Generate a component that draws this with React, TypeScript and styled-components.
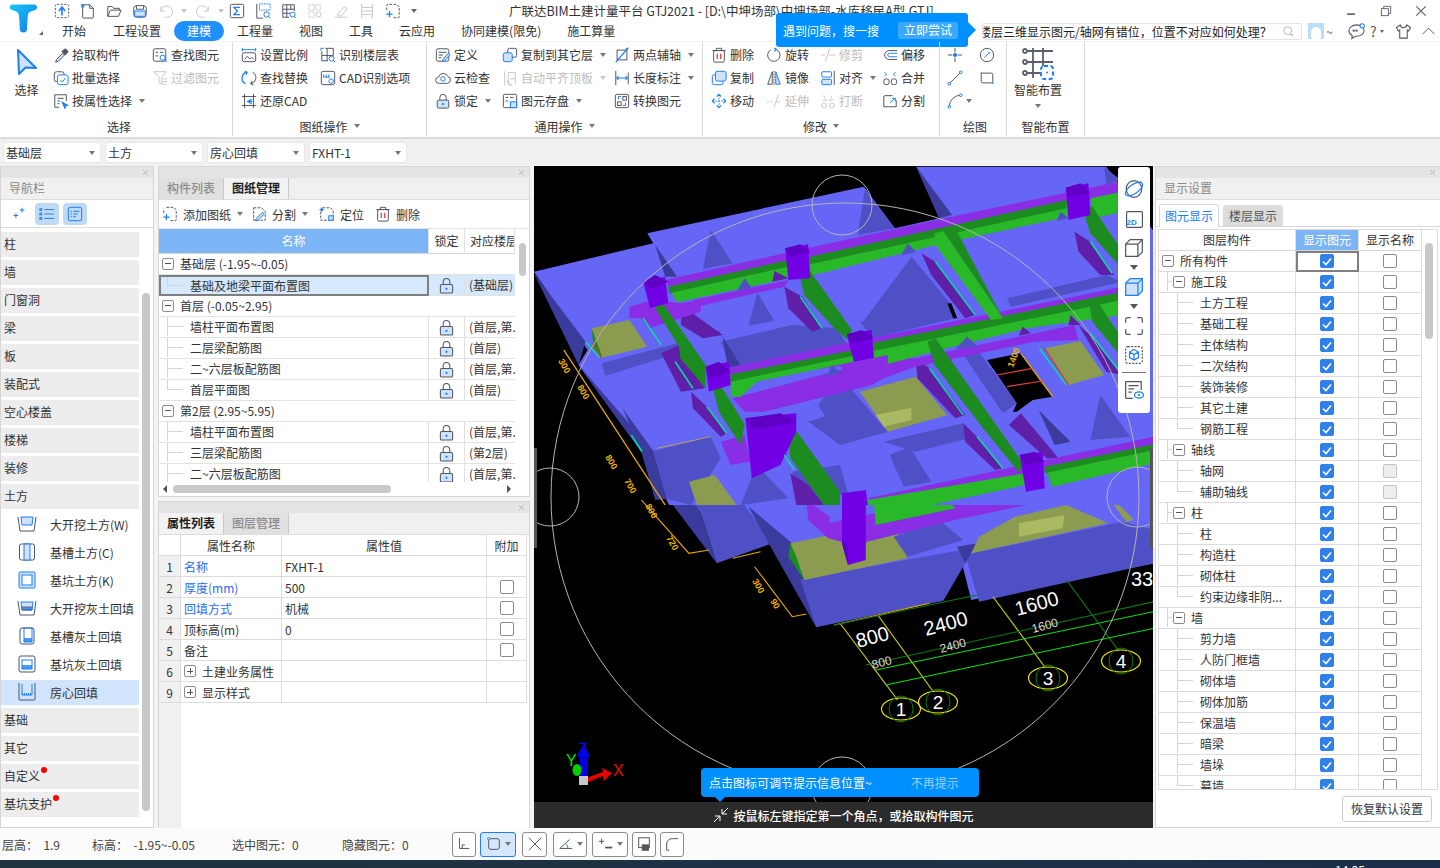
import React from "react";
import styled, { createGlobalStyle } from "styled-components";
import { X } from "lucide-react";

const GR = "#50555f";
const BL = "#1d7ff2";
const LB = "#cfe2fb";
const FONT = `"Noto Sans CJK SC", "Noto Sans", sans-serif`;

const Global = createGlobalStyle`
  html, body { margin: 0; padding: 0; background: #f0f0f0; }
  * { box-sizing: border-box; }
  body { font-family: ${FONT}; font-size: 12px; color: #333; }
`;

const Root = styled.div`
  width: 1440px; height: 868px; display: flex; flex-direction: column; overflow: hidden; background: #f0f0f0;
`;

/* ---------- icons ---------- */
const IconSvg = styled.svg<{ $s: number; $dim?: boolean }>`
  width: ${p => p.$s}px; height: ${p => p.$s}px; flex: none; display: block;
  opacity: ${p => (p.$dim ? 0.32 : 1)};
`;
const ICONS: Record<string, React.ReactNode> = {
  upload: <><rect x="1.5" y="1.5" width="15" height="15" rx="2" strokeDasharray="2.4 1.6" /><path d="M9 14V6M5.5 9 9 4.5 12.500 9" stroke={BL} strokeWidth="1.8" /></>,
  newfile: <><path d="M3 2h8l4 4v10a1 1 0 0 1-1 1H4a1 1 0 0 1-1-1z" /><path d="M11 2v4h4" /><rect x="1" y="1" width="4" height="4" fill={BL} stroke="none" opacity=".7" /></>,
  folder: <><path d="M2 15V4h5l1.500 2H15v2" /><path d="M2 15l3-7h12l-3 7z" /></>,
  save: <><rect x="2" y="3" width="14" height="13" rx="3" /><path d="M5 3v4h8V3" /><rect x="3" y="9" width="12" height="6" fill={LB} stroke={BL} /></>,
  undo: <path d="M3 4v5h5M3.500 9A6.500 6.500 0 1 1 7 15.500" />,
  redo: <path d="M15 4v5h-5M14.500 9A6.500 6.500 0 1 0 11 15.500" />,
  sigma: <><rect x="1.500" y="1.500" width="15" height="15" rx="1.500" /><path d="M12.500 5H5.500L9.500 9l-4 4h7" stroke={BL} strokeWidth="1.400" /></>,
  calc: <><path d="M2 1v16h7" /><rect x="5" y="1" width="12" height="7" stroke={BL} strokeDasharray="1.500 1" /><circle cx="13" cy="13" r="3" stroke={BL} /><path d="M15 15l2 2" stroke={BL} /></>,
  gridsearch: <><path d="M2 2h13v7M2 2v14h7M2 7h13M2 11.500h8M6.500 2v14M11 2v6" /><circle cx="13" cy="13" r="2.800" stroke={BL} /><path d="M15 15l2 2" stroke={BL} /></>,
  grid2: <><path d="M2 2h6v6H2zM10 2h5v6h-5zM2 10h6v6H2z" strokeDasharray="2 1" /><circle cx="13" cy="13" r="2.800" /></>,
  erase: <path d="M2 16h14M5 13l8-9 3 2.500-7 8H5z" />,
  ruler: <path d="M3 1v16M15 1v16M3 5h12M3 9h12M3 13h12" />,
  frameplus: <><path d="M5 1.500h8l3 3v11a1 1 0 0 1-1 1H9M2 8V3a1.500 1.500 0 0 1 1.500-1.500" strokeDasharray="3 1.500" /><path d="M5 9v7M1.500 12.500h7" stroke={BL} strokeWidth="1.400" /></>,
  pick: <><path d="M4 14l7-7 2 2-7 7-3 1z" fill={LB} /><path d="M10 5l4-3 3 3-3 4z" fill={GR} /></>,
  batch: <><rect x="1.500" y="2" width="11" height="11" rx="2.500" stroke={GR} /><rect x="5" y="5.500" width="12" height="11" rx="2.500" stroke={BL} fill="#fff" /><path d="M8 11l2.500 2.500L14 9" stroke={BL} /></>,
  attr: <><path d="M7 16H2V2h13v7" /><path d="M5 6h7M5 9h3M5 12h2" /><path d="M10 10l7 4-3 .500-.500 3z" fill={BL} stroke={BL} /></>,
  findel: <><rect x="1.500" y="2" width="14" height="14" rx="2" /><path d="M4 6h3M9 6h4M4 10h3" /><circle cx="12" cy="12" r="2.800" stroke={BL} fill="#fff" /><path d="M14 14l2.500 2.500" stroke={BL} strokeWidth="1.400" /></>,
  filter: <path d="M2 2h14l-5 6v8l-3-2V8zM12 10h5M12 13h5M12 16h5" />,
  scale: <><path d="M1.500 3h15M1.500 1v4M16.500 1v4" stroke={BL} /><rect x="1.500" y="6.500" width="15" height="10" rx="2" /><path d="M4 14l3-3.500 3 3 2-2 2.500 2.500" /></>,
  replace: <><path d="M6.500 2.500A7 7 0 0 0 5 15.500" stroke={BL} strokeWidth="1.500" /><path d="M11.500 15.500A7 7 0 0 0 13 2.500" /><path d="M4 1l3 1.500-1.500 3" stroke={BL} strokeWidth="1.200" /><path d="M14 17l-3-1.500 1.500-3" strokeWidth="1.200" /></>,
  restore: <><path d="M4 1v16M14 1v16M1 4h16M1 14h16" /><path d="M12 7 7.500 9.500 12 12M8 9.500h5" stroke={BL} strokeWidth="1.400" /></>,
  floor: <><path d="M1 4V1.500h3" stroke={BL} /><path d="M6 1.500h9v8H2V5M8 1.500v14M2 9.500v6h7" /><circle cx="13" cy="13" r="2.800" stroke={BL} /><path d="M15 15l2 2" stroke={BL} /></>,
  cad: <><rect x="1.500" y="1.500" width="15" height="15" rx="2" /><path d="M4 8V5M7 8V5M10 8V5M4 8h7" stroke={BL} /><circle cx="12.500" cy="12.500" r="2.500" stroke={BL} fill="#fff" /></>,
  define: <><rect x="1.500" y="2" width="14" height="14" rx="2" /><path d="M4 6h9M4 9h5M4 12h3" /><path d="M9 14l6-7 2 1.500-6 7-2.500.500z" fill={LB} stroke={BL} /></>,
  cloud: <><path d="M5 15H4.500A3.500 3.500 0 0 1 4 8a5.500 5.500 0 0 1 10.500-.5 3.800 3.800 0 0 1-.5 7.500z" /><circle cx="9" cy="10" r="2.500" stroke={BL} /></>,
  lock: <><path d="M5.500 8V5a3.500 3.500 0 0 1 7 0v3" /><rect x="2.500" y="8" width="13" height="9" rx="1.500" fill={LB} /><circle cx="9" cy="12.500" r="1.200" fill={BL} stroke="none" /></>,
  copylayer: <><rect x="6.500" y="1.500" width="10" height="10" rx="2" /><rect x="1.500" y="6.500" width="10" height="10" rx="2" fill={LB} stroke={BL} /></>,
  align: <><path d="M3 1.500v16" /><path d="M7 3v12M15 3v12M7 3h8" /><path d="M7 17l-1-5 5 5zM9 10h6" /></>,
  two: <><rect x="3.500" y="3.500" width="11" height="11" /><path d="M16 1 2 17M13 3l3-2" stroke={BL} strokeWidth="1.500" /></>,
  length: <><path d="M2 1v16M16 3v13" /><path d="M3 9h12M5 7l-2 2 2 2M13 7l2 2-2 2" stroke={BL} strokeWidth="1.200" /></>,
  disk: <><rect x="1.500" y="1.500" width="15" height="15" rx="1.500" /><path d="M4 5h3M9 5h4M4 9h3" /><rect x="9.500" y="10" width="7" height="6.500" fill={LB} stroke={BL} /></>,
  convert: <><rect x="1.500" y="1.500" width="15" height="15" rx="2" /><rect x="4" y="10" width="4" height="4" /><rect x="10" y="4" width="4" height="4" /><path d="M5 7V4h3M13 11v3h-3" stroke={BL} /></>,
  del: <><path d="M1.500 4h15M6 4V1.500h6V4" /><rect x="3" y="4" width="12" height="13" rx="1.500" /><path d="M7 7.500v6M11 7.500v6" stroke="#e0242a" strokeWidth="1.300" /></>,
  copy: <><rect x="5" y="1.500" width="12" height="11" rx="2" stroke={BL} fill={LB} /><path d="M5 5.500H3a1.500 1.500 0 0 0-1.500 1.500v8A1.500 1.500 0 0 0 3 16.500h9a1.500 1.500 0 0 0 1.500-1.500v-2.500" stroke={BL} /></>,
  move: <><path d="M9 2v14M2 9h14" stroke={BL} strokeDasharray="1.800 1.400" /><path d="M6.500 4 9 1.500 11.500 4M6.500 14 9 16.500 11.500 14M4 6.500 1.500 9 4 11.500M14 6.500 16.500 9 14 11.500" stroke={BL} strokeWidth="1.300" /></>,
  rotate: <><path d="M11 2.500A7 7 0 1 1 5.500 3" /><path d="M9 1l2.500 1.500L9.500 5" stroke={BL} strokeWidth="1.300" /></>,
  mirror: <><path d="M7 2 2 16h5z" /><path d="M11 2l5 14h-5z" fill={LB} stroke={BL} /><path d="M9 1v16" strokeDasharray="2 1" /></>,
  extend: <path d="M1 10h2.500M5.500 10H8M11 10h5M14 2 9 16" />,
  trim: <path d="M1 9h5M10 9h7M11 2 6 16" />,
  alignb: <><rect x="2" y="2" width="11" height="6" rx="1" stroke={BL} /><rect x="2" y="10.500" width="11" height="6" rx="1" stroke={BL} fill={LB} /><path d="M16 1v16" /></>,
  breakit: <><path d="M4 3l1.500 3M13 3l-1 3M3 8h5M10 8h5" stroke={GR} /><rect x="2" y="11.500" width="5" height="5" rx="2" /><rect x="11" y="11.500" width="5" height="5" rx="2" /></>,
  offset: <><path d="M17 4H8a5 5 0 0 0 0 10h9" stroke={GR} /><path d="M17 7H8.500a2 2 0 0 0 0 4H17" stroke={BL} /></>,
  merge: <><path d="M3 2.500 5 5 3 7M15 2.500 13 5l2 2" stroke={BL} /><rect x="2" y="10" width="6" height="6.500" rx="2.500" /><rect x="10.500" y="10" width="6" height="6.500" rx="2.500" /></>,
  split: <><path d="M12 3H3.500A1.500 1.500 0 0 0 2 4.500v11h14V8" /><path d="M9 11l6-5M11 6h4v3" stroke={BL} /></>,
  point: <><path d="M9 1v5M9 12v5M1 9h5M12 9h5" /><circle cx="9" cy="9" r="1.800" fill={BL} stroke={BL} /></>,
  gauge: <><circle cx="9" cy="9" r="7.500" /><path d="M6 12l5-5" stroke={BL} /><circle cx="11.500" cy="6.500" r="1" fill={BL} stroke="none" /></>,
  line: <><path d="M2.500 15.500 15.500 2.500" /><circle cx="2.500" cy="15.500" r="1.500" stroke={BL} fill="#fff" /><circle cx="15.500" cy="2.500" r="1.500" stroke={BL} fill="#fff" /></>,
  rect: <><rect x="2.500" y="3.500" width="13" height="11" rx="1.500" /><circle cx="2.500" cy="3.500" r="1" fill={BL} stroke="none" /><circle cx="15.500" cy="14.500" r="1" fill={BL} stroke="none" /></>,
  arc: <><path d="M2.500 15.500A13 13 0 0 1 15.500 2.500" /><circle cx="2.500" cy="15.500" r="1.500" stroke={BL} fill="#fff" /><circle cx="15.500" cy="2.500" r="1.500" stroke={BL} fill="#fff" /></>,
  sparkle: <path d="M10 4h6M13 1v6M2 11h6M5 8v6" stroke={BL} strokeWidth="1.300" />,
  listv: <><path d="M6 4h11M6 9h11M6 14h11" stroke={BL} /><rect x="1" y="3" width="2" height="2" stroke={BL} /><rect x="1" y="8" width="2" height="2" stroke={BL} /><rect x="1" y="13" width="2" height="2" stroke={BL} /></>,
  listc: <><rect x="1.500" y="1.500" width="15" height="15" rx="2" stroke={BL} /><path d="M4 6h1.500M7 6h7M4 9h1.500M7 9h5M4 12h1.500M7 12h3" stroke={BL} /></>,
  addsheet: <><path d="M5 1.500h8l3 3v11a1 1 0 0 1-1 1H9M2 8V3" strokeDasharray="3 1.500" /><path d="M5 9v7M1.500 12.500h7" stroke={BL} strokeWidth="1.400" /></>,
  splitsheet: <><path d="M3 2h9l4 4v10H3z" strokeDasharray="3 1.500" /><path d="M6 14l7-7 2 2-7 7-3 .500z" fill={LB} stroke={BL} /></>,
  locate: <><path d="M4 2h9l3 3v11H2V6" strokeDasharray="3 1.500" /><path d="M3 1l1 2 2 1-2 1-1 2-1-2-2-1 2-1z" fill={BL} stroke="none" /><rect x="11" y="11" width="5" height="5" fill={LB} stroke={BL} /></>,
  sphere: <><ellipse cx="9" cy="9" rx="7" ry="7.500" /><ellipse cx="9" cy="9" rx="9" ry="4" transform="rotate(-35 9 9)" stroke={BL} /></>,
  d2: <><rect x="1.500" y="1.500" width="15" height="15" rx="1" /></>,
  cube: <><path d="M1.500 5.500l4-4h11v11l-4 4h-11z" /><path d="M1.500 5.500h11v11M12.500 5.500l4-4" /></>,
  cubeb: <><path d="M1.500 5.500l4-4h11v11l-4 4h-11z" stroke={BL} fill={LB} /><path d="M1.500 5.500h11v11M12.500 5.500l4-4" stroke={BL} /></>,
  corners: <path d="M1.500 6V3a1.500 1.500 0 0 1 1.500-1.500h3M12 1.500h3A1.500 1.500 0 0 1 16.500 3v3M16.500 12v3a1.500 1.500 0 0 1-1.500 1.500h-3M6 16.500H3A1.500 1.500 0 0 1 1.500 15v-3" />,
  dashcube: <><rect x="1.500" y="1.500" width="15" height="15" rx="2" strokeDasharray="1.800 1.200" /><path d="M9 4l4 2.300v5L9 13.500l-4-2.200v-5zM5 6.300 9 8.500l4-2.200M9 8.500v5" stroke={BL} /></>,
  sheet: <><path d="M8 16.500H2A.5.5 0 0 1 1.500 16V2A.5.5 0 0 1 2 1.500h13.500V9" /><path d="M4 5h9M4 8h5M4 11h3" /><ellipse cx="13.500" cy="13.500" rx="4" ry="2.800" stroke={BL} /><circle cx="13.500" cy="13.500" r="1" fill={BL} stroke="none" /></>,
  search: <><circle cx="8" cy="8" r="5.500" stroke="#aaa" /><path d="M12 12l3 3" stroke="#aaa" strokeWidth="1.600" /></>,
  chat: <><path d="M9 2C4.500 2 1 4.800 1 8.200c0 2.200 1.400 4 3.500 5L4 16.500l3.800-2.400H9c4.500 0 8-2.600 8-6S13.500 2 9 2z" /><circle cx="6" cy="8" r=".7" fill={GR} /><circle cx="9" cy="8" r=".7" fill={GR} /><circle cx="15" cy="3" r="2.300" fill="#fff" stroke={BL} /></>,
  shirt: <path d="M5.500 2 1.500 5l2 3.500L5 7.500V16h8V7.500l1.500 1 2-3.500-4-3C12 4 10.500 5 9 5S6 4 5.500 2z" />,
  chevup: <path d="M2 12l7-7 7 7" />,
  min: <path d="M4 13h10" strokeWidth="2" />,
  max: <><rect x="3" y="6" width="9" height="9" /><path d="M6 6V3h9v9h-3" /></>,
  close: <path d="M3 3l12 12M15 3 3 15" strokeWidth="1.300" />,
  corner: <><path d="M4 2v12h11M7 14v-4h3" /></>,
  roundsel: <><rect x="3" y="3" width="12" height="12" rx="2.500" stroke={GR} /><circle cx="3" cy="3" r="1.300" fill="#fff" stroke={BL} /></>,
  crossbox: <path d="M2 2l14 14M16 2 2 16" stroke={GR} />,
  angle: <><path d="M2 14h14M2 14 13 4" /><path d="M9 9a5 5 0 0 1 2 5" stroke={BL} /></>,
  plusline: <><path d="M1 6h6M4 3v6" /><path d="M8 13h8" strokeWidth="2" /></>,
  docs: <><rect x="3" y="2" width="12" height="11" /><rect x="7" y="10" width="7" height="6" fill="#555" /></>,
  curve: <path d="M3 16V9a6 6 0 0 1 6-6h7M3 16h3" />,
};
const Icon = ({ n, s = 16, dim }: { n: string; s?: number; dim?: boolean }) => (
  <IconSvg viewBox="0 0 18 18" $s={s} $dim={dim} fill="none" stroke={GR} strokeWidth={1.1}>{ICONS[n]}</IconSvg>
);

/* ---------- header ---------- */
const Header = styled.header`
  position: relative; height: 41px; background: #fff; display: flex; flex: none;
`;
const LogoCell = styled.div`
  width: 50px; flex: none; display: flex; padding: 3px 0 0 8px; position: relative;
`;
const LogoCaret = styled.span`
  position: absolute; left: 39px; top: 31px; border-style: solid; border-width: 0 0 4px 4px;
  border-color: transparent transparent #666 transparent;
`;
const HeaderRows = styled.div`flex: 1; display: flex; flex-direction: column; min-width: 0;`;
const TitleRow = styled.div`height: 21px; display: flex; align-items: center;`;
const QuickBtn = styled.span<{ $ml?: number }>`
  width: 26px; height: 21px; flex: none; display: flex; align-items: center; justify-content: center;
  margin-left: ${p => p.$ml || 0}px;
`;
const QuickCaret = styled.span<{ $dim?: boolean; $w?: number }>`
  width: ${p => p.$w || 10}px; flex: none; display: flex; justify-content: center;
  &::after { content: ""; border-style: solid; border-width: 4px 3px 0; border-color: ${p => (p.$dim ? "#c4c4c4" : "#666")} transparent transparent; }
`;
const Title = styled.div`
  margin-left: 87px; white-space: nowrap; font-size: 12.5px; color: #333; font-family: "Noto Sans CJK SC", sans-serif;
`;
const WinControls = styled.div`margin-left: auto; display: flex; align-items: center; gap: 21px; padding-right: 12px;`;
const TabRow = styled.div`height: 20px; display: flex; align-items: center; margin-left: -1px;`;
const TopTab = styled.div<{ $on?: boolean }>`
  padding: 0 13px; height: 20px; line-height: 20px; border-radius: 10px; white-space: nowrap; flex: none;
  color: ${p => (p.$on ? "#fff" : "#333")}; background: ${p => (p.$on ? "#1e90ff" : "transparent")};
  &:first-child { padding-right: 14px; }
`;
const TopRight = styled.div`margin-left: auto; width: 458px; display: flex; align-items: center; flex: none;`;
const SearchBox = styled.div`
  width: 320px; height: 17px; border: 1px solid #e3e3e3; border-radius: 2px; display: flex; align-items: center;
  overflow: hidden; padding-right: 6px; flex: none;
`;
const SearchText = styled.div`flex: 1; overflow: hidden; white-space: nowrap; color: #222; text-indent: -4px; font-size: 12px; line-height: 15px;`;
const Avatar = styled.div`
  width: 16px; height: 16px; margin-left: 6px; background: #bcdcfa; flex: none; display: flex; align-items: flex-end; justify-content: center;
  &::after { content: ""; width: 10px; height: 12px; background: #fff; border-radius: 5px 5px 2px 2px; }
`;
const Tilde = styled.span`width: 24px; padding-left: 2px; color: #555; flex: none;`;
const RightIcons = styled.div`display: flex; align-items: center; gap: 9px;`;
const HelpMark = styled.span`font-size: 14px; color: #555; display: flex; align-items: center; gap: 3px; margin: 0 2px 0 -4px;
  &::after { content: ""; border-style: solid; border-width: 3px 2px 0; border-color: #666 transparent transparent; }`;
const Popover = styled.div`
  position: absolute; left: 776px; top: 13px; width: 192px; height: 34px; background: #0090ff; border-radius: 3px;
  display: flex; align-items: center; padding-left: 7px; color: #fff; font-size: 12px; justify-content: space-between; padding-right: 10px;
  &::after { content: ""; position: absolute; left: 100%; top: 9px; border-style: solid; border-width: 8px 0 8px 8px; border-color: transparent transparent transparent #0090ff; }
`;
const PopBtn = styled.span`height: 17px; line-height: 16px; width: 60px; text-align: center; background: #3aa9ff; border-radius: 2px;`;

/* ---------- ribbon ---------- */
const Ribbon = styled.section`
  height: 98px; flex: none; background: #fff; display: flex; border-bottom: 2px solid #dcdcdc; border-top: 1px solid #f2f2f2;
`;
const Group = styled.div<{ $w: number }>`
  width: ${p => p.$w}px; flex: none; display: flex; flex-direction: column; position: relative; padding-top: 1px;
  border-right: 1px solid #dadada; margin-bottom: 1px;
`;
const GroupBody = styled.div<{ $pl?: number }>`flex: 1; display: flex; padding-left: ${p => p.$pl || 0}px;`;
const GroupLabel = styled.div<{ $pl?: number }>`
  height: 20px; display: flex; align-items: center; justify-content: center; gap: 6px; color: #333; flex: none;
  padding-left: ${p => p.$pl || 0}px;
`;
const Col = styled.div<{ $w: number }>`width: ${p => p.$w}px; flex: none; display: flex; flex-direction: column;`;
const Tool = styled.div<{ $dim?: boolean }>`
  height: 23px; display: flex; align-items: center; gap: 3px; white-space: nowrap; color: ${p => (p.$dim ? "#bdbdbd" : "#333")};
`;
const Caret = styled.span<{ $dim?: boolean; $ml?: number }>`
  display: inline-block; flex: none; margin-left: ${p => p.$ml ?? 4}px; border-style: solid; border-width: 4px 3px 0;
  border-color: ${p => (p.$dim ? "#c8c8c8" : "#777")} transparent transparent;
`;
const BigCol = styled.div<{ $w: number }>`
  width: ${p => p.$w}px; flex: none; display: flex; flex-direction: column; align-items: center; padding-top: 5px;
`;
const BigLabel = styled.div<{ $mt?: number; $mb?: number }>`margin-top: ${p => p.$mt || 6}px; margin-bottom: ${p => p.$mb || 0}px; line-height: 16px; white-space: nowrap;`;

type T = [string, string, boolean?, boolean?];
const Tools = ({ w, items }: { w: number; items: (T | null)[] }) => (
  <Col $w={w}>
    {items.map((it, i) =>
      it ? (
        <Tool key={i} $dim={it[3]}>
          <Icon n={it[0]} dim={it[3]} />
          {it[1]}
          {it[2] && <Caret $dim={it[3]} />}
        </Tool>
      ) : (
        <Tool key={i} />
      )
    )}
  </Col>
);

const Combos = styled.div`
  height: 26px; flex: none; background: #f0f0f0; display: flex; gap: 4px; padding: 3px 0 0 3px;
`;
const Combo = styled.div`
  width: 98px; height: 21px; background: #fff; border-radius: 3px; display: flex; align-items: center;
  justify-content: space-between; padding: 0 5px 0 2px; color: #333; border: 1px solid #e8e8e8;
`;

/* ---------- layout ---------- */
const Main = styled.main`height: 663px; flex: none; display: flex; padding-top: 1px; background: #f4f4f4;`;
const Panel = styled.section<{ $w?: number; $h?: number }>`
  ${p => (p.$w ? `width: ${p.$w}px;` : "")} ${p => (p.$h ? `height: ${p.$h}px;` : "")}
  flex: none; background: #fff; border: 1px solid #d6d6d6; display: flex; flex-direction: column; overflow: hidden;
`;
const Strip = styled.div`
  height: 11px; background: #e4e4e4; flex: none; display: flex; justify-content: flex-end; align-items: center; padding-right: 3px; color: #aaa;
`;
const PanelTitle = styled.div`
  height: 22px; background: #f0f0f0; color: #8a8a8a; flex: none; padding-left: 8px; line-height: 20px; border-bottom: 1px solid #ddd;
`;

/* nav */
const NavTools = styled.div`
  height: 28px; display: flex; align-items: center; gap: 4px; padding-left: 8px; border-bottom: 1px solid #ddd; flex: none;
`;
const NavBtn = styled.span<{ $on?: boolean }>`
  width: 24px; height: 22px; display: flex; align-items: center; justify-content: center; border-radius: 4px;
  background: ${p => (p.$on ? "#c0d9f5" : "transparent")}; margin-left: ${p => (p.$on ? 0 : -2)}px;
`;
const NavBody = styled.div`flex: 1; display: flex; min-height: 0; padding-top: 4px;`;
const NavList = styled.div`width: 138px; flex: none; display: flex; flex-direction: column; gap: 3px;`;
const NavHead = styled.div`
  height: 25px; background: #ededed; display: flex; align-items: center; padding: 0 0 2px 3px; position: relative; flex: none; color: #333;
`;
const RedDot = styled.span`
  width: 6px; height: 6px; border-radius: 50%; background: #f00; margin: -12px 0 0 1px; flex: none;
`;
const NavItem = styled.div<{ $on?: boolean }>`
  height: 25px; display: flex; align-items: center; padding: 0 0 1px 16px; gap: 13px; flex: none; white-space: nowrap;
  background: ${p => (p.$on ? "#d0e4fb" : "transparent")}; color: #333;
`;
const NavScroll = styled.div`
  width: 8px; height: 518px; margin: 61px 0 0 3px; background: #c8c8c8; border-radius: 4px; flex: none;
`;

/* mid */
const MidCol = styled.div`width: 372px; margin-left: 4px; flex: none; display: flex; flex-direction: column; gap: 4px;`;
const TabsBar = styled.div`height: 22px; display: flex; background: #f0f0f0; border-bottom: 1px solid #ddd; flex: none;`;
const FlatTab = styled.div<{ $on?: boolean }>`
  width: 65px; text-align: center; line-height: 20px; border-right: 1px solid #c8c8c8;
  background: ${p => (p.$on ? "#f2f2f2" : "#e0e0e0")}; color: ${p => (p.$on ? "#222" : "#8c8c8c")}; font-weight: ${p => (p.$on ? 600 : 500)};
`;
const MidTools = styled.div`height: 29px; display: flex; align-items: center; padding-left: 3px; border-bottom: 1px solid #e2e2e2; flex: none;`;
const MidTool = styled.div<{ $mr: number }>`display: flex; align-items: center; gap: 5px; margin-right: ${p => p.$mr}px; white-space: nowrap;`;
const Spacer = styled.span<{ $w: number }>`width: ${p => p.$w}px; flex: none; margin-right: -5px;`;
const TreeWrap = styled.div`flex: 1; display: flex; min-height: 0;`;
const TreeTable = styled.div`width: 356px; flex: none; overflow: hidden; height: 253px;`;
const TreeHead = styled.div`display: grid; grid-template-columns: 270px 36px 50px; height: 25px;`;
const HeadCell = styled.div<{ $on?: boolean; $left?: boolean }>`
  display: flex; align-items: center; justify-content: ${p => (p.$left ? "flex-start" : "center")}; white-space: nowrap; overflow: hidden;
  padding: 0 0 1px ${p => (p.$left ? 5 : 0)}px;
  background: ${p => (p.$on ? "#7cb5f5" : "#fff")}; color: ${p => (p.$on ? "#fff" : "#333")};
  border-right: 1px solid #e0e0e0; border-bottom: 1px solid #d8d8d8;
`;
const TreeRow = styled.div<{ $sel?: boolean }>`
  display: grid; grid-template-columns: 270px 36px 50px; height: 21px; background: ${p => (p.$sel ? "#d6e8fb" : "#fff")};
`;
const GroupRow = styled.div`height: 21px; display: flex; align-items: center; padding: 0 0 1px 3px; gap: 6px; border-bottom: 1px solid #e2e2e2; white-space: nowrap;`;
const Toggle = styled.span`
  width: 12px; height: 12px; border: 1px solid #8c8c8c; border-radius: 2px; flex: none; display: flex; align-items: center; justify-content: center; background: #fff;
  &::after { content: ""; width: 6px; height: 1px; background: #555; }
`;
const PlusToggle = styled(Toggle)`
  position: relative;
  &::before { content: ""; position: absolute; width: 1px; height: 6px; background: #555; left: 4.500px; top: 2px; }
`;
const RToggle = styled(Toggle)`margin: 0 6px 0 -6px;`;
const NameCell = styled.div<{ $sel?: boolean }>`
  display: flex; align-items: center; white-space: nowrap; padding: 0 0 1px 8px; min-width: 0;
  border-right: 1px solid #e0e0e0; border-bottom: 1px solid #e2e2e2;
  ${p => (p.$sel ? "outline: 2px solid #7f7f7f; outline-offset: -2px; border: 0;" : "")}
`;
const Guide = styled.span<{ $w: number; $last?: boolean }>`
  width: ${p => p.$w}px; height: 100%; flex: none; align-self: stretch; margin-right: 7px;
  background:
    linear-gradient(#d4d4d4, #d4d4d4) 0 0 / 1px ${p => (p.$last ? "50%" : "100%")} no-repeat,
    linear-gradient(#d4d4d4, #d4d4d4) 0 50% / 100% 1px no-repeat;
`;
const LockCell = styled.div`
  display: flex; align-items: center; justify-content: center; border-right: 1px solid #e0e0e0; border-bottom: 1px solid #e2e2e2;
`;
const FloorCell = styled.div`
  display: flex; align-items: center; padding: 0 0 1px 4px; overflow: hidden; white-space: nowrap; border-bottom: 1px solid #e2e2e2;
`;
const VTrack = styled.div`flex: 1; padding: 14px 0 0 4px;`;
const VThumb = styled.div<{ $h: number; $w?: number }>`
  width: ${p => p.$w || 7}px; height: ${p => p.$h}px; background: #c8c8c8; border-radius: 4px;
`;
const HScroll = styled.div`height: 14px; display: flex; align-items: center; padding: 0 5px 0 4px; flex: none; position: relative;`;
const ArrowL = styled.span`border-style: solid; border-width: 4px 4px 4px 0; border-color: transparent #555 transparent transparent;`;
const ArrowR = styled.span`border-style: solid; border-width: 4px 0 4px 4px; border-color: transparent transparent transparent #555; margin-left: auto; margin-right: 13px;`;
const HThumb = styled.span`width: 218px; height: 8px; margin-left: 6px; background: #c8c8c8; border-radius: 4px;`;

/* props */
const PropBody = styled.div`flex: 1; display: flex; flex-direction: column; background: linear-gradient(90deg, #f0f0f0 22px, #fff 22px);`;
const PropRow = styled.div`display: grid; grid-template-columns: 22px 101px 205px 40px; height: 21px; flex: none; width: 369px;`;
const PCell = styled.div<{ $center?: boolean; $bg?: string; $color?: string }>`
  display: flex; align-items: center; justify-content: ${p => (p.$center ? "center" : "flex-start")}; white-space: nowrap;
  padding-left: ${p => (p.$center ? 0 : 3)}px; gap: 6px; background: ${p => p.$bg || "#fff"}; color: ${p => p.$color || "#333"};
  border-right: 1px solid #dcdcdc; border-bottom: 1px solid #dcdcdc;
`;
const Check = styled.span<{ $on?: boolean; $off?: boolean }>`
  width: 14px; height: 14px; border-radius: 2px; display: flex; align-items: center; justify-content: center; flex: none;
  border: 1px solid ${p => (p.$on ? "#2f80e8" : p.$off ? "#c4c4c4" : "#8a8a8a")};
  background: ${p => (p.$on ? "#2f80e8" : p.$off ? "#eeeeee" : "#fff")};
`;

/* canvas */
const Canvas = styled.section`
  width: 619px; margin-left: 4px; flex: none; background: #000; display: flex; flex-direction: column; position: relative; overflow: hidden;
`;
const Scene = styled.div`flex: 1; min-height: 0;`;
const SceneSvg = styled.svg`width: 100%; height: 100%; display: block;`;
const HintBar = styled.div`
  height: 26px; flex: none; background: #2b2b2b; color: #fff; display: flex; align-items: center; justify-content: center; gap: 4px; font-weight: 500;
`;
const ViewTools = styled.div`
  position: absolute; left: 584px; top: 1px; width: 32px; height: 246px; background: #fff; border-radius: 3px;
  display: flex; flex-direction: column; align-items: center; padding-top: 12px; gap: 0;
`;
const ViewBtn = styled.div<{ $mb: number }>`margin-bottom: ${p => p.$mb}px; position: relative; display: flex; flex-direction: column; align-items: center;`;
const TwoD = styled.span`
  position: absolute; left: 2px; bottom: 1px; font-size: 8px; font-weight: 700; color: ${BL}; font-family: "Liberation Sans", sans-serif; line-height: 10px;
`;
const ViewSep = styled.div`width: 24px; height: 1px; background: #777; margin: 0 0 7px;`;
const DownTri = styled.span<{ $mb: number }>`
  border-style: solid; border-width: 5px 4px 0; border-color: #555 transparent transparent; margin-bottom: ${p => p.$mb}px;
`;
const Tip = styled.div`
  position: absolute; left: 167px; bottom: 31px; width: 278px; height: 29px; background: #0090ff; border-radius: 4px; color: #fff;
  display: flex; align-items: center; padding-left: 8px; white-space: nowrap;
  &::after { content: ""; position: absolute; left: 14px; top: 100%; border-style: solid; border-width: 5px 5px 0; border-color: #0090ff transparent transparent; }
`;
const TipMuted = styled.span`margin-left: 39px; color: #9ad2ff;`;
const SplitHandle = styled.div<{ $side: "l" | "r" }>`
  position: absolute; ${p => (p.$side === "l" ? "left: 0;" : "right: 0;")} top: 282px; width: 3px; height: 100px; background: #555;
`;

/* right */
const RightPanel = styled(Panel)`margin-left: 2px; border-right: 0;`;
const PillTabs = styled.div`height: 27px; display: flex; align-items: flex-end; gap: 4px; padding: 0 0 0 3px; border-bottom: 1px solid #d8d8d8; flex: none;`;
const PillTab = styled.div<{ $on?: boolean }>`
  width: 60px; height: ${p => (p.$on ? 23 : 21)}px; text-align: center; line-height: 21px; border-radius: 3px 3px 0 0; margin-bottom: ${p => (p.$on ? -1 : 0)}px;
  background: ${p => (p.$on ? "#fff" : "#dcdcdc")}; color: ${p => (p.$on ? BL : "#555")};
  border: ${p => (p.$on ? "1px solid #d8d8d8" : "0")}; border-bottom: 0;
`;
const RTableBox = styled.div`
  margin: 2px 2px 0 2px; height: 561px; border: 1px solid #dcdcdc; display: flex; overflow: hidden; flex: none;
`;
const RTable = styled.div`width: 263px; flex: none; height: 100%; overflow: hidden;`;
const RRow = styled.div`display: grid; grid-template-columns: 137px 63px 63px; height: 21px;`;
const RName = styled.div`
  display: flex; align-items: center; padding: 0 0 1px 3px; white-space: nowrap; gap: 6px; border-right: 1px solid #dcdcdc; border-bottom: 1px solid #dcdcdc;
`;
const RChild = styled(RName)<{ $lv: number }>`padding-left: ${p => (p.$lv === 1 ? 8 : 18)}px; gap: 0;`;
const RCheck = styled.div<{ $sel?: boolean }>`
  display: flex; align-items: center; justify-content: center; border-right: 1px solid #dcdcdc; border-bottom: 1px solid #dcdcdc;
  ${p => (p.$sel ? "outline: 2px solid #7f7f7f; outline-offset: -2px;" : "")}
`;
const RVTrack = styled.div`padding: 13px 0 0 3px;`;
const RFoot = styled.div`flex: 1; display: flex; justify-content: flex-end; align-items: center; padding-right: 8px;`;
const FootBtn = styled.button`
  width: 90px; height: 26px; background: #fff; border: 1px solid #ccc; border-radius: 3px; font-family: ${FONT}; font-size: 12px; color: #333; padding: 0;
`;

/* status */
const Status = styled.footer`height: 32px; flex: none; background: #fbfbfb; display: flex; align-items: center; color: #444; position: relative;`;
const StatusText = styled.span<{ $w: number }>`width: ${p => p.$w}px; flex: none; white-space: nowrap; padding-left: 2px;`;
const StatusBtn = styled.span<{ $w: number; $on?: boolean; $ml?: number }>`
  width: ${p => p.$w}px; height: 25px; flex: none; display: flex; align-items: center; justify-content: center; gap: 3px;
  border: 1px solid ${p => (p.$on ? BL : "#8c8c8c")}; border-radius: 3px; background: ${p => (p.$on ? "#d6e6fb" : "#fff")};
  margin-left: ${p => p.$ml ?? 4}px;
`;
const Taskbar = styled.div`
  height: 8px; flex: none; background: linear-gradient(90deg, #1f3440, #1c2f4a); overflow: hidden; display: flex; justify-content: flex-end; padding-right: 75px;
  color: #fff; font-size: 12px; line-height: 20px;
`;

/* ---------- data ---------- */
const CheckMark = () => (
  <svg width="10" height="9" viewBox="0 0 10 9"><path d="M1 4.500 4 7.500 9 1.500" fill="none" stroke="#fff" strokeWidth="1.600" /></svg>
);
const LockIcon = () => <Icon n="lock" s={17} />;

const NAV_TOP = ["柱", "墙", "门窗洞", "梁", "板", "装配式", "空心楼盖", "楼梯", "装修", "土方"];
const NAV_BOT: [string, boolean][] = [["基础", false], ["其它", false], ["自定义", true], ["基坑支护", true]];
const NavGlyph = ({ k }: { k: number }) => (
  <svg width="20" height="20" viewBox="0 0 20 20" fill="none" stroke="#45566f" strokeWidth="1">
    {k === 0 && <><path d="M1 3l2 14h14l2-14" /><path d="M4 3h12l-1 8H5z" fill={LB} stroke={BL} /></>}
    {k === 1 && <><rect x="2.500" y="2" width="15" height="16" rx="2" /><rect x="7" y="2" width="6" height="16" fill={LB} stroke={BL} /></>}
    {k === 2 && <><rect x="2" y="2" width="16" height="16" rx="1" fill={LB} stroke={BL} /><rect x="5" y="5" width="10" height="10" fill="#fff" stroke={BL} /></>}
    {k === 3 && <><path d="M1 3l2 14h14l2-14" /><path d="M4 4h12l-1 8H5z" fill={LB} stroke={BL} /><path d="M5 9h10v3H5z" fill={BL} opacity=".8" /></>}
    {k === 4 && <><rect x="3" y="2" width="14" height="16" rx="2" /><rect x="7" y="2" width="8" height="14" stroke={BL} /><rect x="7" y="12" width="8" height="4" fill={BL} stroke="none" opacity=".8" /></>}
    {k === 5 && <><rect x="2" y="2" width="16" height="16" rx="2" /><rect x="5" y="6" width="10" height="9" fill="#fff" stroke={BL} /><rect x="5" y="11" width="10" height="4" fill={BL} stroke="none" opacity=".8" /></>}
    {k === 6 && <><path d="M2 1v16a1 1 0 0 0 1 1h14a1 1 0 0 0 1-1V1" /><path d="M5 2v11h10V2" stroke={BL} /><path d="M5 12h10" stroke={BL} strokeWidth="2" strokeDasharray="1 1" /></>}
  </svg>
);
const NAV_SUB = ["大开挖土方(W)", "基槽土方(C)", "基坑土方(K)", "大开挖灰土回填", "基槽灰土回填", "基坑灰土回填", "房心回填"];

type Tr = { g?: string; n?: string; f?: string; last?: boolean; sel?: boolean };
const TREE: Tr[] = [
  { g: "基础层 (-1.95~-0.05)" },
  { n: "基础及地梁平面布置图", f: "(基础层)", sel: true, last: true },
  { g: "首层 (-0.05~2.95)" },
  { n: "墙柱平面布置图", f: "(首层,第." },
  { n: "二层梁配筋图", f: "(首层)" },
  { n: "二~六层板配筋图", f: "(首层,第." },
  { n: "首层平面图", f: "(首层)", last: true },
  { g: "第2层 (2.95~5.95)" },
  { n: "墙柱平面布置图", f: "(首层,第." },
  { n: "三层梁配筋图", f: "(第2层)" },
  { n: "二~六层板配筋图", f: "(首层,第." },
];
const PROPS: [string, string, string, string, boolean][] = [
  ["1", "名称", "FXHT-1", "#2a6cf0", false],
  ["2", "厚度(mm)", "500", "#2a6cf0", true],
  ["3", "回填方式", "机械", "#2a6cf0", true],
  ["4", "顶标高(m)", "0", "#333", true],
  ["5", "备注", "", "#333", true],
];
const RIGHT: [string, number, boolean?, boolean?][] = [
  ["所有构件", 0], ["施工段", 1], ["土方工程", 2], ["基础工程", 2], ["主体结构", 2], ["二次结构", 2], ["装饰装修", 2], ["其它土建", 2], ["钢筋工程", 2, true],
  ["轴线", 1, false, true], ["轴网", 2, false, true], ["辅助轴线", 2, true, true],
  ["柱", 1], ["柱", 2], ["构造柱", 2], ["砌体柱", 2], ["约束边缘非阴...", 2, true],
  ["墙", 1], ["剪力墙", 2], ["人防门框墙", 2], ["砌体墙", 2], ["砌体加筋", 2], ["保温墙", 2], ["暗梁", 2], ["墙垛", 2], ["幕墙", 2, true],
];

/* ---------- 3D scene (drawing) ---------- */
const L = "#6666f6", M = "#5050c6", D = "#3b3b9e", V = "#8a2ee6", Vd = "#5f1fa8", G = "#28b828", Gd = "#1d8c20", C = "#7200e4", Ct = "#5f00c4", O = "#8b9b50", Ol = "#a9ba62";
type Poly = [string, string];
const BOTTOM: Poly[] = [
  [D, "340,0 460,190 420,40 395,0"],
  [M, "395,0 540,0 600,130 460,190 420,40"],
  [L, "520,0 1560,0 1560,190 1100,300 1075,180 650,240 600,130"],
  [D, "540,20 650,130 680,240 710,382 600,150"],
  [M, "670,238 1075,150 1085,190 1030,302 710,382"],
  [M, "1085,165 1480,65 1560,90 1560,190 1120,305"],
  [D, "1065,140 1115,130 1085,190"],
  [O, "645,130 905,65 940,175 680,240"],
  [Gd, "645,130 640,170 680,240 660,170"],
  [O, "1100,160 1120,110 1210,50 1340,15 1445,70"],
  [Ol, "1220,70 1335,45 1330,85 1220,110"],
  [M, "905,110 1020,60 1080,120 940,170"],
  [V, "740,70 855,40 1060,0 1300,0 1060,60 805,135 740,115"],
  [G, "855,0 1040,0 1060,25 860,75"],
  [V, "685,0 745,50 740,115 690,60"],
  [C, "775,0 835,0 835,180 790,195 775,130"],
  [Ct, "775,130 790,195 790,130"],
  [O, "1460,0 1510,60 1490,65 1450,0"],
];
const TOP: Poly[] = [
  [L, "0,320 300,235 285,205 830,65 908,190 1020,160 962,5 1440,5 1560,200 1560,1020 340,1020 270,860 112,600 135,555"],
  [D, "0,325 130,530 112,600"],
  [D, "112,600 300,858 335,1002 305,1005 270,860"],
  [M, "300,858 445,815 470,880 395,1020 335,1002"],
  [D, "305,240 360,335 330,335"],
  [M, "425,312 445,195 500,295"],
  [M, "815,210 832,75 908,190"],
  [D, "962,5 1020,160 1052,150"],
  [M, "1435,5 1476,45 1440,60"],
  [M, "170,595 360,535 362,565 180,632"],
  [M, "828,470 950,275 1045,412"],
  [M, "540,482 562,382 605,468"],
  [M, "470,530 650,480 760,490 790,540 620,610 500,620"],
  [M, "820,470 1040,412 1060,460 850,520"],
  [M, "690,770 820,720 890,800 770,840"],
  [M, "715,720 770,632 890,800 770,830"],
  [M, "1190,400 1440,330 1480,350 1200,425"],
  [M, "1400,825 1425,690 1500,815"],
  [M, "880,830 1080,775 1110,815 960,860"],
  [M, "1100,530 1215,715 1180,745 1075,560"],
  [M, "895,870 945,845 1000,950 930,965"],
  [M, "650,920 770,900 790,985 680,1010"],
  [D, "222,728 300,858 272,860"],
  [D, "390,480 470,500 430,510"],
  [D, "1270,735 1350,830 1310,840"],
  [D, "475,515 530,620 490,625"],
  [M, "560,900 640,1000 520,1020"],
  [O, "145,490 240,465 285,545 170,578"],
  [Gd, "145,490 150,550 170,580 170,570"],
  [O, "820,680 960,635 1040,750 890,800"],
  [Ol, "860,750 950,728 950,765 880,785"],
  [O, "1285,550 1375,528 1435,630 1345,660"],
  [O, "390,950 455,930 510,1020 410,1020"],
  [Vd, "370,420 475,510 425,520 370,480"],
  [V, "240,425 300,405 370,415 420,405 420,440 290,490 270,460 240,460"],
  [Vd, "320,565 365,540 430,670 370,680"],
  [Vd, "630,365 675,395 725,490 700,500 640,430"],
  [Vd, "975,265 1010,290 1110,450 1085,460 1000,330"],
  [Vd, "1360,200 1400,230 1460,330 1425,330 1370,260"],
  [Vd, "960,580 995,610 1085,750 1060,760 965,640"],
  [Vd, "395,680 435,725 485,805 470,815 400,730"],
  [Vd, "1080,775 1115,815 1180,910 1160,915 1085,830"],
  [Vd, "1370,480 1400,510 1480,630 1440,620"],
  [Vd, "1195,780 1225,745 1320,880 1290,880"],
  [Vd, "645,925 690,960 730,1020 660,1020"],
  [V, "470,830 530,810 545,890 495,900"],
  [V, "330,345 640,262 1050,155 1480,48 1480,80 1090,205 640,300 345,375"],
  [V, "400,405 640,345 630,365 410,425"],
  [V, "430,622 1480,365 1480,392 1200,460 885,570 790,600 498,645"],
  [V, "500,700 770,615 890,575 960,580 1360,480 1370,525 1260,530 960,605 880,640 850,660 580,740 530,740"],
  [V, "840,1000 1560,815 1560,850 1240,930 860,1020"],
  [G, "340,370 640,288 640,340 360,412"], [Gd, "338,365 640,285 640,305 340,385"],
  [G, "695,278 1340,108 1345,155 1030,235 720,325 695,330"], [Gd, "695,275 1340,105 1340,130 695,298"],
  [G, "1400,100 1480,80 1480,140 1410,160"],
  [G, "495,630 805,555 805,590 560,650 520,695 495,695"], [Gd, "495,628 805,555 805,572 495,650"],
  [G, "855,535 1480,385 1480,450 1240,490 1020,555 890,597 855,580"], [Gd, "855,533 1480,380 1480,405 855,558"],
  [G, "1285,908 1560,838 1560,895 1305,965"], [Gd, "1285,905 1560,838 1560,855 1285,925"],
  [G, "840,1005 1235,925 1235,960 1000,1020 840,1020"],
  [M, "530,340 510,378 548,370"],
  [Vd, "605,318 640,340 600,350"],
  [M, "940,235 925,270 962,262"],
  [M, "1325,140 1315,168 1345,160"],
  [M, "750,600 735,635 772,625"],
  [M, "1090,515 1060,552 1118,545"],
  [Vd, "1230,485 1220,512 1250,505"],
  [Vd, "1350,450 1345,480 1375,480"],
  [Gd, "295,410 318,405 432,600 432,670 368,580 365,545"],
  [Gd, "665,315 690,310 800,495 790,525 755,490 680,390"],
  [G, "1008,205 1030,198 1180,460 1150,465 1010,240"],
  [Gd, "1030,198 1060,190 1180,460"],
  [Gd, "1380,130 1405,125 1480,258 1480,312 1400,205"],
  [Gd, "990,530 1010,520 1228,890 1222,925 1130,790 1008,600"],
  [Gd, "1398,420 1420,415 1480,520 1480,580 1405,470"],
  [Gd, "450,668 470,662 530,778 520,840 465,740"],
  [Gd, "640,805 662,800 770,980 770,1020 730,1020 645,880"],
  [C, "275,352 330,335 338,415 292,430"], [Ct, "275,352 305,330 338,350 292,372"],
  [C, "632,250 690,238 695,340 640,345"], [Ct, "632,250 670,238 695,262 640,275"],
  [C, "1338,68 1395,55 1400,150 1345,165"], [Ct, "1338,68 1375,55 1400,85 1345,95"],
  [C, "787,508 850,495 855,580 805,590"], [Ct, "787,508 825,495 855,520 800,535"],
  [C, "432,605 490,590 495,660 440,680"], [Ct, "432,605 465,590 495,620 440,640"],
  [V, "770,600 890,570 890,620 850,660 800,660"],
  [C, "532,760 660,745 660,800 620,900 548,940"], [Ct, "532,760 620,745 660,770 555,795"],
  [C, "1222,870 1280,860 1285,970 1238,980"], [Ct, "1222,870 1260,860 1285,890 1235,900"],
  [C, "775,985 835,975 840,1020 775,1020"],
  ["#000", "1040,415 1050,415 1065,460 1055,460"],
  ["#000", "1140,585 1225,565 1305,695 1255,705 1215,740 1205,740 1215,715"],
];
const TEAL: string[] = ["275,460 320,540", "670,395 725,490", "1010,290 1110,450", "1400,230 1455,325", "355,590 400,670", "995,610 1080,750", "1400,505 1480,630", "435,725 485,805", "1115,815 1180,910", "630,870 655,915", "130,530 165,578", "1272,550 1340,660", "245,810 272,860"];
const DIM_LABELS: [number, number, string][] = [[558, 361, "300"], [577, 387, "800"], [605, 457, "800"], [624, 481, "700"], [645, 506, "800"], [666, 538, "720"], [752, 581, "300"], [770, 601, "90"]];

const Scene3D = () => (
  <SceneSvg viewBox="534 166 619 636" preserveAspectRatio="none">
    <rect x="534" y="166" width="619" height="636" fill="#000" />
    <g transform="translate(534 500) scale(.3974 .3333)">
      {BOTTOM.map((p, i) => <polygon key={i} fill={p[0]} points={p[1]} />)}
    </g>
    <g transform="translate(534 165) scale(.3974 .3333)">
      {TOP.map((p, i) => <polygon key={i} fill={p[0]} points={p[1]} />)}
      {TEAL.map((p, i) => <polyline key={i} points={p} fill="none" stroke="#00e39a" strokeWidth="4" />)}
      <polyline points="75,555 330,1020" fill="none" stroke="#e6a800" strokeWidth="3.500" />
      <polyline points="1225,565 1305,695" fill="none" stroke="#e6a800" strokeWidth="3.500" />
      <polyline points="1165,630 1255,610" fill="none" stroke="#e04040" strokeWidth="3.500" />
      <polyline points="1190,665 1280,648" fill="none" stroke="#e04040" strokeWidth="3.500" />
      <polyline points="310,850 445,815" fill="none" stroke="#b8a24a" strokeWidth="3" />
      <polyline points="145,535 170,578" fill="none" stroke="#e03a1e" strokeWidth="3" />
      <polyline points="1285,550 1345,660" fill="none" stroke="#e03a1e" strokeWidth="3" />
    </g>
    <g transform="translate(534 500) scale(.3974 .3333)" fill="none" strokeWidth="3">
      <polyline points="270,0 390,160 440,150" stroke="#e6a800" />
      <polyline points="500,175 570,155" stroke="#e6a800" />
      <polyline points="555,200 650,350 685,342" stroke="#e6a800" />
      <polyline points="755,375 995,310" stroke="#e6a800" />
      <polyline points="770,370 915,600" stroke="#c8c800" />
      <polyline points="865,345 1005,575" stroke="#c8c800" />
      <polyline points="1155,290 1285,500" stroke="#c8c800" />
      <polyline points="1340,240 1470,450" stroke="#0c7a0c" />
      <polyline points="755,375 1115,285" stroke="#0c7a0c" />
      <polyline points="835,495 1560,305" stroke="#0c7a0c" />
      <polyline points="860,510 1560,335" stroke="#10e010" />
      <polyline points="885,555 1560,385" stroke="#10e010" />
    </g>
    {DIM_LABELS.map(([x, y, t], i) => (
      <DimText key={i} x={x} y={y} transform={`rotate(60 ${x} ${y})`}>{t}</DimText>
    ))}
    <DimText x="1013" y="368" transform="rotate(-70 1013 368)">1400</DimText>
    <g fill="none" stroke="#b4b4b4" strokeWidth="1">
      <circle cx="845" cy="497" r="294" />
      <circle cx="842" cy="205" r="30" />
      <circle cx="550" cy="497" r="29" />
      <circle cx="1137" cy="497" r="30" />
      <circle cx="842" cy="787" r="30" />
    </g>
    <WhiteText x="858" y="648" fontSize="20" transform="rotate(-15 858 648)">800</WhiteText>
    <WhiteText x="926" y="636" fontSize="20" transform="rotate(-15 926 636)">2400</WhiteText>
    <WhiteText x="1017" y="616" fontSize="20" transform="rotate(-15 1017 616)">1600</WhiteText>
    <WhiteText x="1131" y="586" fontSize="20">33</WhiteText>
    <GrayText x="873" y="669" fontSize="12" transform="rotate(-15 873 669)">800</GrayText>
    <GrayText x="941" y="653" fontSize="12" transform="rotate(-15 941 653)">2400</GrayText>
    <GrayText x="1033" y="633" fontSize="12" transform="rotate(-15 1033 633)">1600</GrayText>
    {[[901, 709, "1"], [938, 702, "2"], [1048, 678, "3"], [1121, 661, "4"]].map(([x, y, t]) => (
      <g key={t as string}>
        <ellipse cx={x as number} cy={y as number} rx="19.500" ry="11" fill="none" stroke="#f0e400" strokeWidth="1.200" />
        <ellipse cx={x as number} cy={y as number} rx="12" ry="13" fill="none" stroke="#0f7a0f" strokeWidth="1" />
        <WhiteText x={x as number} y={(y as number) + 7} fontSize="19" textAnchor="middle">{t}</WhiteText>
      </g>
    ))}
    <polygon points="580,782 580,757 577,757 584,744 590,757 588,757 588,782" fill="#0000e0" />
    <ellipse cx="577" cy="770" rx="4.500" ry="6" fill="#00d000" />
    <polygon points="586,778 603,772 602,768 612,773 604,781 603,776 588,782" fill="#e80000" />
    <rect x="579" y="776" width="9" height="9" fill="#c8c8c8" />
    <AxisText x="578" y="755" fill="#0000ff">Z</AxisText>
    <AxisText x="566" y="766" fill="#00e000">Y</AxisText>
    <AxisText x="613" y="776" fill="#ff0000">X</AxisText>
  </SceneSvg>
);
const DimText = styled.text`font: 700 9px "Liberation Sans", sans-serif; fill: #f0b400;`;
const WhiteText = styled.text`font-family: "Liberation Sans Narrow", "Liberation Sans", sans-serif; fill: #fff;`;
const GrayText = styled.text`font-family: "Liberation Sans", sans-serif; fill: #d8d8d8;`;
const AxisText = styled.text`font: 16px "Liberation Sans", sans-serif;`;

/* ---------- app ---------- */
export default function App() {
  return (
    <Root>
      <Global />
      <Header>
        <LogoCell>
          <svg width="31" height="30" viewBox="0 0 31 30">
            <defs>
              <linearGradient id="lg" x1="0" y1="0" x2="1" y2="1"><stop offset="0" stopColor="#19c8f0" /><stop offset="1" stopColor="#0f78f0" /></linearGradient>
            </defs>
            <path d="M3.500 1.500h23a2.800 2.800 0 0 1 .8 5.400c-3.500 1-6 1.500-7 3.500-.8 2-1 10.600-1.300 15.300a3.600 3.600 0 0 1-7.200.2c-.3-5-.3-12-1.300-15-1-2.500-3.800-2.900-7.500-4.300a2.800 2.800 0 0 1 1-5.100z" fill="url(#lg)" />
          </svg>
          <LogoCaret />
        </LogoCell>
        <HeaderRows>
          <TitleRow>
            <QuickBtn $ml={-1}><Icon n="upload" /></QuickBtn>
            <QuickBtn><Icon n="newfile" /></QuickBtn>
            <QuickBtn><Icon n="folder" /></QuickBtn>
            <QuickBtn><Icon n="save" /></QuickBtn>
            <QuickBtn><Icon n="undo" dim /></QuickBtn>
            <QuickCaret $dim />
            <QuickBtn $ml={1}><Icon n="redo" dim /></QuickBtn>
            <QuickCaret $dim />
            <QuickBtn $ml={-2}><Icon n="sigma" /></QuickBtn>
            <QuickBtn><Icon n="calc" /></QuickBtn>
            <QuickBtn><Icon n="gridsearch" /></QuickBtn>
            <QuickBtn><Icon n="grid2" dim /></QuickBtn>
            <QuickBtn><Icon n="erase" dim /></QuickBtn>
            <QuickBtn><Icon n="ruler" dim /></QuickBtn>
            <QuickBtn><Icon n="frameplus" /></QuickBtn>
            <QuickCaret $w={16} />
            <Title>广联达BIM土建计量平台 GTJ2021 - [D:\中坤场部\中坤场部-水库移民A型.GTJ]</Title>
            <WinControls>
              <Icon n="min" s={14} />
              <Icon n="max" s={14} />
              <Icon n="close" s={14} />
            </WinControls>
          </TitleRow>
          <TabRow>
            {["开始", "工程设置", "建模", "工程量", "视图", "工具", "云应用", "协同建模(限免)", "施工算量"].map(t => (
              <TopTab key={t} $on={t === "建模"}>{t}</TopTab>
            ))}
            <TopRight>
              <SearchBox>
                <SearchText>{"楼层三维显示图元/轴网有错位\uFF0C位置不对应如何处理\uFF1F"}</SearchText>
                <Icon n="search" s={13} />
              </SearchBox>
              <Avatar />
              <Tilde>~</Tilde>
              <RightIcons>
                <Icon n="chat" s={17} />
                <HelpMark>?</HelpMark>
                <Icon n="shirt" s={17} />
                <Icon n="chevup" s={15} />
              </RightIcons>
            </TopRight>
          </TabRow>
        </HeaderRows>
        <Popover>{"遇到问题\uFF0C搜一搜"}<PopBtn>立即尝试</PopBtn></Popover>
      </Header>

      <Ribbon>
        <Group $w={233}>
          <GroupBody>
            <BigCol $w={53}>
              <svg width="24" height="28" viewBox="0 0 24 28"><path d="M3 2 21 20l-10.500-.5L4 26z" fill={LB} stroke={BL} strokeWidth="2" strokeLinejoin="round" /></svg>
              <BigLabel $mt={6}>选择</BigLabel>
            </BigCol>
            <Tools w={99} items={[["pick", "拾取构件"], ["batch", "批量选择"], ["attr", "按属性选择", true]]} />
            <Tools w={80} items={[["findel", "查找图元"], ["filter", "过滤图元", false, true], null]} />
          </GroupBody>
          <GroupLabel $pl={6}>选择</GroupLabel>
        </Group>
        <Group $w={194}>
          <GroupBody $pl={8}>
            <Tools w={79} items={[["scale", "设置比例"], ["replace", "查找替换"], ["restore", "还原CAD"]]} />
            <Tools w={100} items={[["floor", "识别楼层表"], ["cad", "CAD识别选项"], null]} />
          </GroupBody>
          <GroupLabel>图纸操作<Caret $ml={0} /></GroupLabel>
        </Group>
        <Group $w={276}>
          <GroupBody $pl={8}>
            <Tools w={67} items={[["define", "定义"], ["cloud", "云检查"], ["lock", "锁定", true]]} />
            <Tools w={112} items={[["copylayer", "复制到其它层", true], ["align", "自动平齐顶板", true, true], ["disk", "图元存盘", true]]} />
            <Tools w={88} items={[["two", "两点辅轴", true], ["length", "长度标注", true], ["convert", "转换图元"]]} />
          </GroupBody>
          <GroupLabel>通用操作<Caret $ml={0} /></GroupLabel>
        </Group>
        <Group $w={237}>
          <GroupBody $pl={8}>
            <Tools w={55} items={[["del", "删除"], ["copy", "复制"], ["move", "移动"]]} />
            <Tools w={54} items={[["rotate", "旋转"], ["mirror", "镜像"], ["extend", "延伸", false, true]]} />
            <Tools w={62} items={[["trim", "修剪", false, true], ["alignb", "对齐", true], ["breakit", "打断", false, true]]} />
            <Tools w={50} items={[["offset", "偏移"], ["merge", "合并"], ["split", "分割"]]} />
          </GroupBody>
          <GroupLabel>修改<Caret $ml={0} /></GroupLabel>
        </Group>
        <Group $w={67}>
          <GroupBody $pl={7}>
            <Col $w={32}>
              <Tool><Icon n="point" /></Tool>
              <Tool><Icon n="line" /></Tool>
              <Tool><Icon n="arc" /><Caret $ml={0} /></Tool>
            </Col>
            <Col $w={22}>
              <Tool><Icon n="gauge" /></Tool>
              <Tool><Icon n="rect" /></Tool>
            </Col>
          </GroupBody>
          <GroupLabel $pl={4}>绘图</GroupLabel>
        </Group>
        <Group $w={78}>
          <GroupBody>
            <BigCol $w={62}>
              <svg width="32" height="32" viewBox="0 0 32 32" fill="none" stroke="#5a5f6a" strokeWidth="1.800">
                <path d="M5 3h26M5 14h26M5 25h20M11 0v30M21 0v18" />
                <circle cx="3" cy="3" r="2" fill="#fff" /><circle cx="3" cy="14" r="2" fill="#fff" /><circle cx="3" cy="25" r="2" fill="#fff" />
                <rect x="19" y="18" width="12" height="13" rx="3" fill="#fff" stroke={BL} strokeWidth="2" strokeDasharray="4 2.500" />
                <circle cx="25" cy="24.500" r="1" fill={BL} stroke="none" />
              </svg>
              <BigLabel $mt={2} $mb={6}>智能布置</BigLabel>
              <Caret $ml={0} />
            </BigCol>
          </GroupBody>
          <GroupLabel>智能布置</GroupLabel>
        </Group>
      </Ribbon>

      <Combos>
        {["基础层", "土方", "房心回填", "FXHT-1"].map(t => (
          <Combo key={t}>{t}<Caret /></Combo>
        ))}
      </Combos>

      <Main>
        <Panel $w={154}>
          <Strip><X size={9} /></Strip>
          <PanelTitle>导航栏</PanelTitle>
          <NavTools>
            <NavBtn><Icon n="sparkle" s={14} /></NavBtn>
            <NavBtn $on><Icon n="listv" s={16} /></NavBtn>
            <NavBtn $on><Icon n="listc" s={16} /></NavBtn>
          </NavTools>
          <NavBody>
            <NavList>
              {NAV_TOP.map(t => <NavHead key={t}>{t}</NavHead>)}
              {NAV_SUB.map((t, i) => (
                <NavItem key={t} $on={i === 6}><NavGlyph k={i} />{t}</NavItem>
              ))}
              {NAV_BOT.map(([t, dot]) => (
                <NavHead key={t}>{t}{dot && <RedDot />}</NavHead>
              ))}
            </NavList>
            <NavScroll />
          </NavBody>
        </Panel>

        <MidCol>
          <Panel $h={331}>
            <Strip><X size={9} /></Strip>
            <TabsBar>
              <FlatTab>构件列表</FlatTab>
              <FlatTab $on>图纸管理</FlatTab>
            </TabsBar>
            <MidTools>
              <MidTool $mr={6}><Icon n="addsheet" />添加图纸</MidTool>
              <Caret $ml={0} />
              <MidTool $mr={6}><Spacer $w={8} /><Icon n="splitsheet" />分割</MidTool>
              <Caret $ml={0} />
              <MidTool $mr={11}><Spacer $w={11} /><Icon n="locate" />定位</MidTool>
              <MidTool $mr={0}><Icon n="del" />删除</MidTool>
            </MidTools>
            <TreeWrap>
              <TreeTable>
                <TreeHead>
                  <HeadCell $on>名称</HeadCell>
                  <HeadCell>锁定</HeadCell>
                  <HeadCell $left>对应楼层</HeadCell>
                </TreeHead>
                {TREE.map((r, i) =>
                  r.g ? (
                    <GroupRow key={i}><Toggle />{r.g}</GroupRow>
                  ) : (
                    <TreeRow key={i} $sel={r.sel}>
                      <NameCell $sel={r.sel}><Guide $w={16} $last={r.last} />{r.n}</NameCell>
                      <LockCell><LockIcon /></LockCell>
                      <FloorCell>{r.f}</FloorCell>
                    </TreeRow>
                  )
                )}
              </TreeTable>
              <VTrack><VThumb $h={33} /></VTrack>
            </TreeWrap>
            <HScroll><ArrowL /><HThumb /><ArrowR /></HScroll>
          </Panel>
          <Panel $h={328}>
            <Strip><X size={9} /></Strip>
            <TabsBar>
              <FlatTab $on>属性列表</FlatTab>
              <FlatTab>图层管理</FlatTab>
            </TabsBar>
            <PropBody>
              <PropRow>
                <PCell />
                <PCell $center>属性名称</PCell>
                <PCell $center>属性值</PCell>
                <PCell $center>附加</PCell>
              </PropRow>
              {PROPS.map(([n, name, val, color, chk]) => (
                <PropRow key={n}>
                  <PCell $center $bg="#f0f0f0">{n}</PCell>
                  <PCell $color={color}>{name}</PCell>
                  <PCell>{val}</PCell>
                  <PCell $center>{chk && <Check />}</PCell>
                </PropRow>
              ))}
              {[["6", "土建业务属性"], ["9", "显示样式"]].map(([n, name]) => (
                <PropRow key={n}>
                  <PCell $center $bg="#f0f0f0">{n}</PCell>
                  <PCell><PlusToggle />{name}</PCell>
                  <PCell />
                  <PCell />
                </PropRow>
              ))}
            </PropBody>
          </Panel>
        </MidCol>

        <Canvas>
          <Scene><Scene3D /></Scene>
          <HintBar>
            <svg width="16" height="16" viewBox="0 0 16 16" fill="none" stroke="#fff"><path d="M15 1 9 7M9 2v5h5M1 15l6-6M2 9h5v5" /></svg>
            {"按鼠标左键指定第一个角点\uFF0C或拾取构件图元"}
          </HintBar>
          <ViewTools>
            <ViewBtn $mb={11}><Icon n="sphere" s={20} /></ViewBtn>
            <ViewBtn $mb={9}><Icon n="d2" s={19} /><TwoD>2D</TwoD></ViewBtn>
            <ViewBtn $mb={7}><Icon n="cube" s={20} /></ViewBtn>
            <DownTri $mb={7} />
            <ViewBtn $mb={7}><Icon n="cubeb" s={20} /></ViewBtn>
            <DownTri $mb={7} />
            <ViewBtn $mb={9}><Icon n="corners" s={20} /></ViewBtn>
            <ViewBtn $mb={7}><Icon n="dashcube" s={20} /></ViewBtn>
            <ViewSep />
            <ViewBtn $mb={0}><Icon n="sheet" s={20} /></ViewBtn>
          </ViewTools>
          <Tip>点击图标可调节提示信息位置~<TipMuted>不再提示</TipMuted></Tip>
          <SplitHandle $side="l" />
          <SplitHandle $side="r" />
        </Canvas>

        <RightPanel $w={285}>
          <Strip><X size={9} /></Strip>
          <PanelTitle>显示设置</PanelTitle>
          <PillTabs>
            <PillTab $on>图元显示</PillTab>
            <PillTab>楼层显示</PillTab>
          </PillTabs>
          <RTableBox>
            <RTable>
              <RRow>
                <HeadCell>图层构件</HeadCell>
                <HeadCell $on>显示图元</HeadCell>
                <HeadCell>显示名称</HeadCell>
              </RRow>
              {RIGHT.map(([name, lv, last, off], i) => (
                <RRow key={i}>
                  {lv === 0 && <RName><Toggle />{name}</RName>}
                  {lv === 1 && <RChild $lv={1}><Guide $w={5} $last={false} /><RToggle />{name}</RChild>}
                  {lv === 2 && <RChild $lv={2}><Guide $w={16} $last={last} />{name}</RChild>}
                  <RCheck $sel={i === 0}><Check $on><CheckMark /></Check></RCheck>
                  <RCheck><Check $off={off && lv === 2} /></RCheck>
                </RRow>
              ))}
            </RTable>
            <RVTrack><VThumb $h={96} $w={8} /></RVTrack>
          </RTableBox>
          <RFoot><FootBtn>恢复默认设置</FootBtn></RFoot>
        </RightPanel>
      </Main>

      <Status>
        <StatusText $w={90}>{"层高\uFF1A\u00A0\u00A01.9"}</StatusText>
        <StatusText $w={140}>{"标高\uFF1A\u00A0\u00A0-1.95~-0.05"}</StatusText>
        <StatusText $w={110}>{"选中图元\uFF1A0"}</StatusText>
        <StatusText $w={112}>{"隐藏图元\uFF1A0"}</StatusText>
        <StatusBtn $w={24} $ml={0}><Icon n="corner" /></StatusBtn>
        <StatusBtn $w={36} $on><Icon n="roundsel" /><Caret $ml={0} /></StatusBtn>
        <StatusBtn $w={25} $ml={6}><Icon n="crossbox" /></StatusBtn>
        <StatusBtn $w={34} $ml={6}><Icon n="angle" /><Caret $ml={0} /></StatusBtn>
        <StatusBtn $w={36} $ml={5}><Icon n="plusline" /><Caret $ml={0} /></StatusBtn>
        <StatusBtn $w={24}><Icon n="docs" /></StatusBtn>
        <StatusBtn $w={24}><Icon n="curve" /></StatusBtn>
      </Status>
      <Taskbar>14:25</Taskbar>
    </Root>
  );
}
